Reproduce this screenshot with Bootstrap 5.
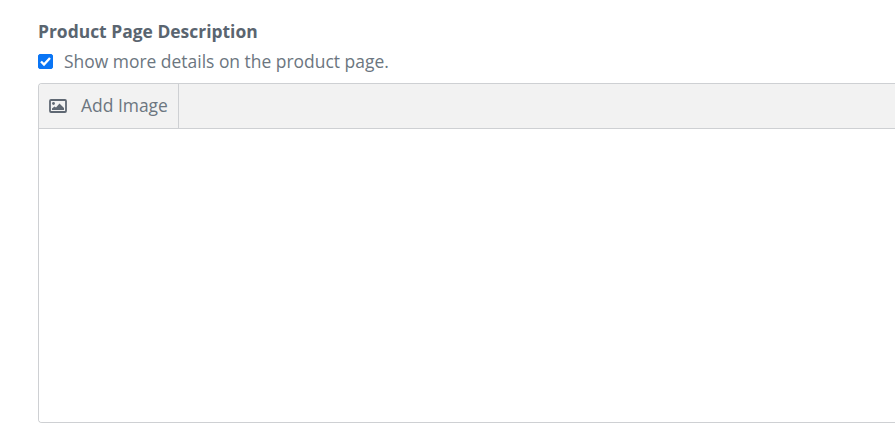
<!DOCTYPE html>
<html lang="en"><head><meta charset="utf-8">
<link href="https://cdn.jsdelivr.net/npm/bootstrap@5.3.0/dist/css/bootstrap.min.css" rel="stylesheet">
<style>
html,body{height:434px;overflow:hidden;background:#fff}
body{font-family:"Open Sans",sans-serif;color:#555f6b}
.page-wrap{padding:20px 0 0 38px;width:895px}
.title-label{font-size:17.45px;font-weight:700;line-height:22px;color:#5a6570;margin-bottom:8px}
.check-row{gap:11px;height:22px;font-size:17.45px;margin-bottom:11px;color:#6c7680}
.check-box{width:15px;height:15px;margin:0;flex:none;border-radius:2px!important}
.check-box:checked{background-color:#0a75f5;border-color:#0a75f5;background-size:15px 15px;background-image:url("data:image/svg+xml,%3csvg xmlns='http://www.w3.org/2000/svg' viewBox='0 0 15 15'%3e%3cpath fill='none' stroke='%23fff' stroke-width='2.4' d='M3 7.500l3 3 6-6.500'/%3e%3c/svg%3e")}
.editor-box{width:880px;height:340px;border:1px solid #ced0d3;border-right:0;border-radius:4px 0 0 4px;overflow:hidden}
.editor-bar{height:45px;background:#f2f2f2;border-bottom:1px solid #ced0d3}
.tool-btn{height:44px;padding:0 10px 2px 10px;gap:14px;font-size:17.45px;color:#6c7680;border-right:1px solid #ced0d3;border-radius:0}
.tool-btn svg{flex:none;margin-top:2px}
</style></head><body>
<div class="page-wrap">
<div class="title-label">Product Page Description</div>
<div class="d-flex align-items-center check-row"><input class="form-check-input check-box" type="checkbox" checked id="c"><label for="c">Show more details on the product page.</label></div>
<div class="editor-box d-flex flex-column">
<div class="editor-bar d-flex"><div class="tool-btn d-flex align-items-center">
<svg width="18" height="14" viewBox="0 0 18 14"><rect x="1" y="1" width="16" height="12" rx="1" fill="none" stroke="#5f6873" stroke-width="1.8"/><circle cx="4.500" cy="4.500" r="1.400" fill="#5f6873"/><path d="M3 11v-1.500l2.500-2 1.500 1 3.500-4 4.500 4.500v2z" fill="#5f6873"/></svg>
<span>Add Image</span></div></div>
<div class="flex-grow-1 bg-white"></div>
</div></div>
<script src="https://cdn.jsdelivr.net/npm/bootstrap@5.3.0/dist/js/bootstrap.bundle.min.js"></script>
</body></html>
